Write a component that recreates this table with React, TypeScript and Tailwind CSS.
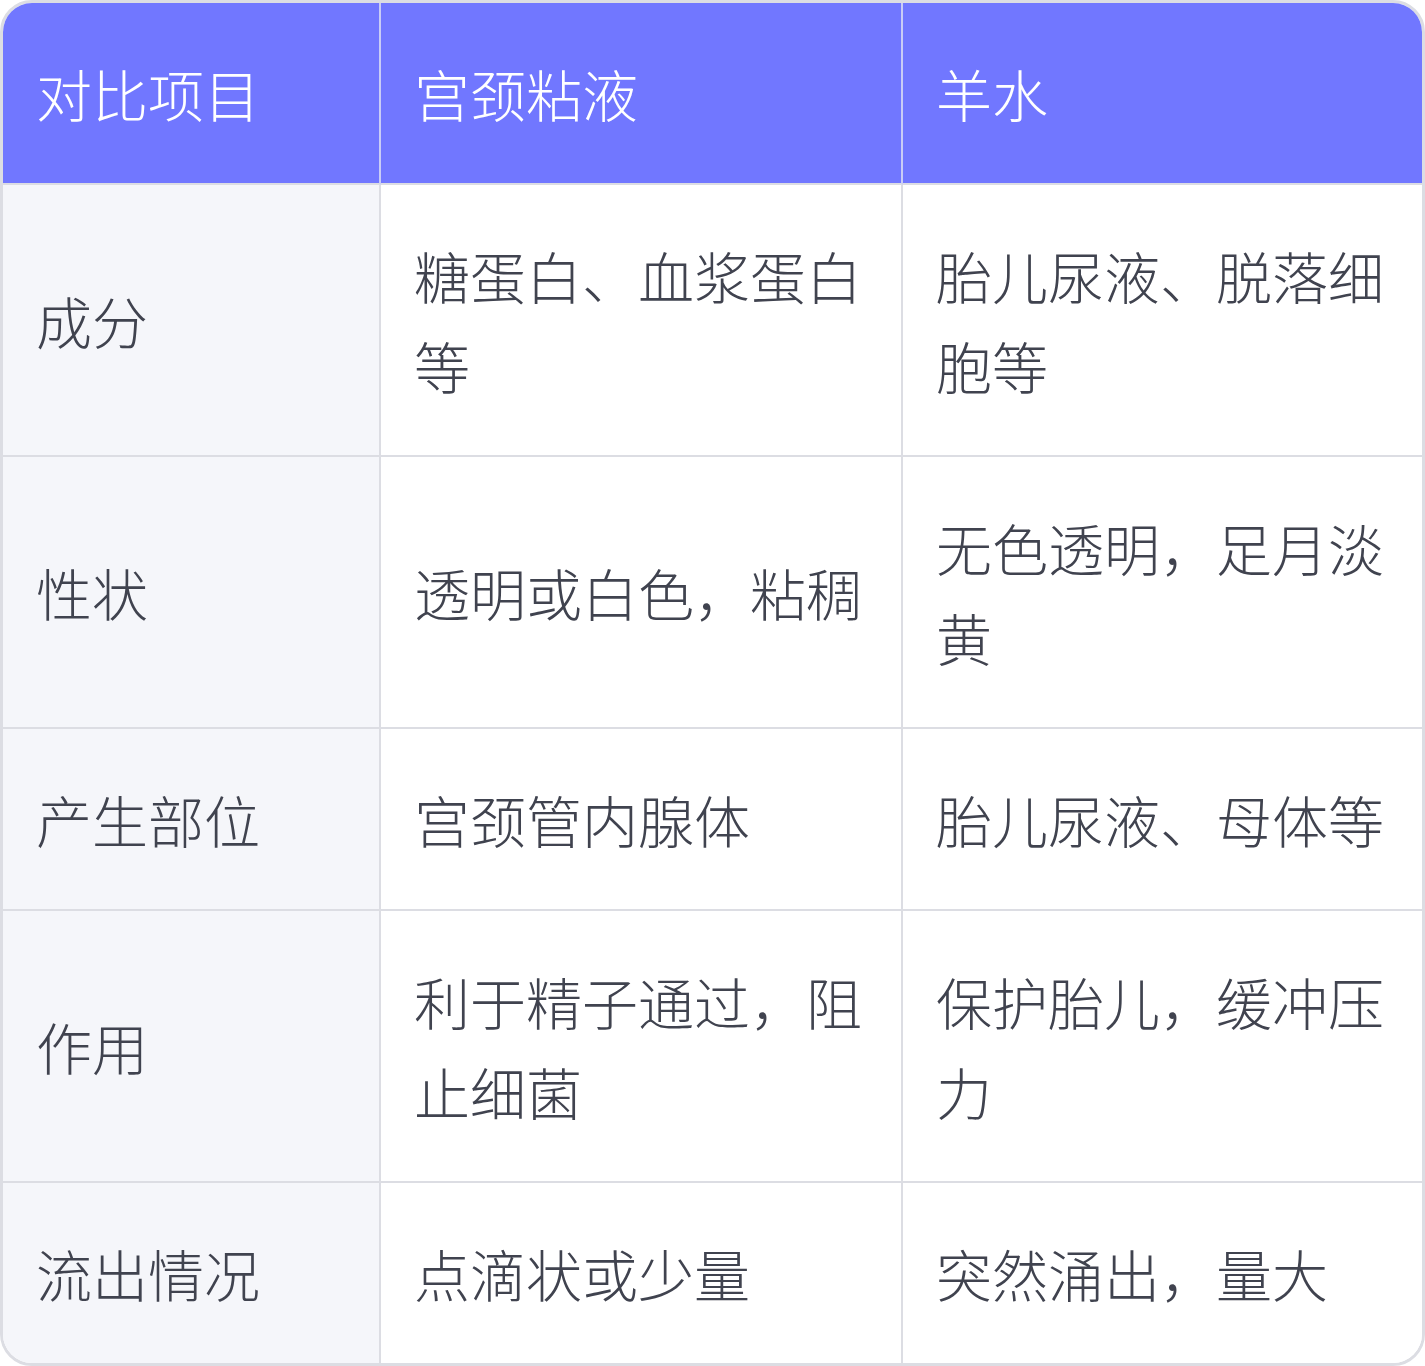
const header = ['对比项目', '宫颈粘液', '羊水'];

const rows: string[][] = [
  ['成分', '糖蛋白、血浆蛋白等', '胎儿尿液、脱落细胞等'],
  ['性状', '透明或白色，粘稠', '无色透明，足月淡黄'],
  ['产生部位', '宫颈管内腺体', '胎儿尿液、母体等'],
  ['作用', '利于精子通过，阻止细菌', '保护胎儿，缓冲压力'],
  ['流出情况', '点滴状或少量', '突然涌出，量大'],
];

export default function App() {
  return (
    <div className="w-[1425px] h-[1366px] bg-white font-['Noto_Sans_CJK_SC','Noto_Sans',sans-serif] font-light">
      <div className="h-full border-[3px] border-[#dcdde3] rounded-[32px] overflow-hidden">
        <div className="grid grid-cols-[378px_522px_1fr] text-[56px] leading-[90px]">
          {header.map((h, i) => (
            <div
              key={h}
              className={`bg-[#7177ff] text-white px-[33px] py-[45px] border-b-2 border-b-[#dcdde3] ${
                i < 2 ? 'border-r-2 border-r-[#c9ccf6]' : ''
              }`}
            >
              {h}
            </div>
          ))}
          {rows.map((r, ri) =>
            r.map((c, ci) => (
              <div
                key={ri + '-' + ci}
                className={`flex items-center px-[33px] py-[45px] text-[#40434f] border-[#dcdde3] ${
                  ri < rows.length - 1 ? 'border-b-2' : ''
                } ${ci < 2 ? 'border-r-2' : ''} ${ci === 0 ? 'bg-[#f5f6fa]' : 'bg-white'}`}
              >
                <span>{c}</span>
              </div>
            ))
          )}
        </div>
      </div>
    </div>
  );
}
